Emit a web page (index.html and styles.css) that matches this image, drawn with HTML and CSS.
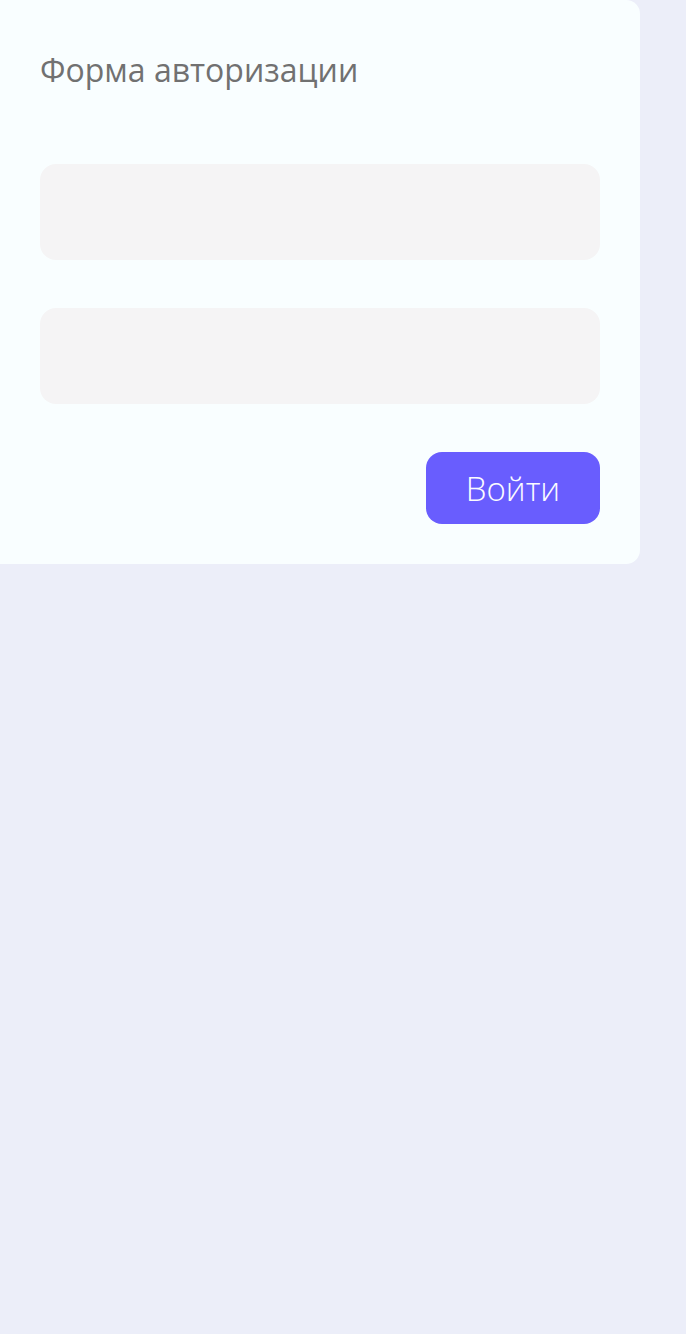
FILE: index.html
```html
<!DOCTYPE html>
<html lang="ru">
<head>
<meta charset="utf-8">
<title>Форма авторизации</title>
<link rel="stylesheet" href="styles.css">
</head>
<body>
<form class="card">
  <h1 class="title">Форма авторизации</h1>
  <input class="field" type="text">
  <input class="field" type="password">
  <div class="actions">
    <button class="btn" type="button">Войти</button>
  </div>
</form>
</body>
</html>
```

FILE: styles.css
```css
html, body {
  margin: 0;
  padding: 0;
}
body {
  background: #eceef9;
  min-height: 1334px;
  font-family: "Open Sans", "Noto Sans", sans-serif;
}
.card {
  width: 640px;
  box-sizing: border-box;
  background: #f9feff;
  border-radius: 0 14px 14px 0;
  padding: 52px 40px 40px;
  display: flex;
  flex-direction: column;
}
.title {
  margin: 0 0 76px;
  font-size: 32px;
  line-height: 36px;
  font-weight: 400;
  color: #717171;
}
.field {
  display: block;
  height: 96px;
  border: none;
  border-radius: 16px;
  background: #f5f4f5;
  margin: 0 0 48px;
  padding: 0 24px;
  outline: none;
}
.actions {
  display: flex;
  justify-content: flex-end;
}
.btn {
  width: 174px;
  height: 72px;
  border: none;
  border-radius: 16px;
  background: #695dfe;
  color: #fbfbff;
  font-family: inherit;
  font-size: 33px;
  font-weight: 300;
  padding: 0;
}
```
